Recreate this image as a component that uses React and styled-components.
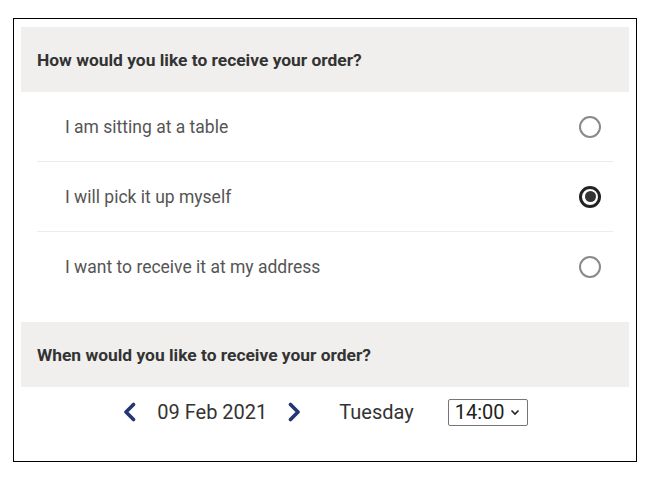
import React from "react";
import styled, { createGlobalStyle } from "styled-components";

const Global = createGlobalStyle`
  html, body { margin: 0; padding: 0; background: #fff; }
  body { font-family: Roboto, "Liberation Sans", Arial, sans-serif; }
`;

const Page = styled.div`
  padding: 18px 0 0 13px;
`;

const Card = styled.div`
  box-sizing: border-box;
  width: 624px;
  height: 444px;
  border: 1px solid #000;
  padding: 8px 7px;
`;

const SectionHeader = styled.div`
  height: 65px;
  display: flex;
  align-items: center;
  padding-left: 16px;
  background: #f0efee;
  color: #333;
  font-weight: 700;
  font-size: 17.4px;
`;

const OptionList = styled.div`
  padding: 0 16px;
  margin-bottom: 20px;
`;

const Option = styled.label`
  box-sizing: border-box;
  height: 70px;
  display: flex;
  align-items: center;
  justify-content: space-between;
  padding: 0 12px 0 28px;
  border-bottom: ${(p) => (p.$last ? "none" : "1px solid #ececec")};
  color: #555;
  font-size: 17.5px;
  cursor: pointer;
`;

const Radio = styled.span`
  box-sizing: border-box;
  width: 22px;
  height: 22px;
  border-radius: 50%;
  border: ${(p) => (p.$checked ? "3px solid #222" : "2px solid #8a8a8a")};
  display: flex;
  align-items: center;
  justify-content: center;
  &::after {
    content: "";
    display: ${(p) => (p.$checked ? "block" : "none")};
    width: 11px;
    height: 11px;
    border-radius: 50%;
    background: #333;
  }
`;

const DateRow = styled.div`
  height: 50px;
  display: flex;
  align-items: center;
  justify-content: center;
  color: #333;
  font-size: 20px;
`;

const NavButton = styled.button`
  border: none;
  background: none;
  padding: 0;
  display: flex;
  align-items: center;
  cursor: pointer;
  margin: ${(p) => p.$margin};
`;

const DateText = styled.span`
  margin-right: 20px;
`;

const DayText = styled.span`
  margin: 0 34px 0 37px;
`;

const TimeSelect = styled.div`
  box-sizing: border-box;
  width: 80px;
  height: 27px;
  border: 1px solid #767676;
  border-radius: 2px;
  display: flex;
  align-items: center;
  padding-left: 6px;
  gap: 5px;
  font-size: 20px;
  color: #222;
`;

const Chevron = ({ dir }) => (
  <svg width="15" height="20" viewBox="0 0 15 20">
    <polyline
      points={dir === "left" ? "11.5,2.5 4,10 11.5,17.5" : "3.5,2.5 11,10 3.5,17.5"}
      fill="none"
      stroke="#243674"
      strokeWidth="3.6"
      strokeLinecap="round"
      strokeLinejoin="round"
    />
  </svg>
);

const options = [
  { label: "I am sitting at a table", checked: false },
  { label: "I will pick it up myself", checked: true },
  { label: "I want to receive it at my address", checked: false },
];

export default function App() {
  return (
    <>
      <Global />
      <Page>
        <Card>
          <SectionHeader>How would you like to receive your order?</SectionHeader>
          <OptionList>
            {options.map((o, i) => (
              <Option key={o.label} $last={i === options.length - 1}>
                <span>{o.label}</span>
                <Radio $checked={o.checked} />
              </Option>
            ))}
          </OptionList>
          <SectionHeader>When would you like to receive your order?</SectionHeader>
          <DateRow>
            <NavButton $margin="0 20px 0 0" aria-label="previous day">
              <Chevron dir="left" />
            </NavButton>
            <DateText>09 Feb 2021</DateText>
            <NavButton $margin="0" aria-label="next day">
              <Chevron dir="right" />
            </NavButton>
            <DayText>Tuesday</DayText>
            <TimeSelect>
              <span>14:00</span>
              <svg width="10" height="7" viewBox="0 0 10 7">
                <polyline points="1.5,1.5 5,5 8.5,1.5" fill="none" stroke="#222" strokeWidth="1.6" />
              </svg>
            </TimeSelect>
          </DateRow>
        </Card>
      </Page>
    </>
  );
}
